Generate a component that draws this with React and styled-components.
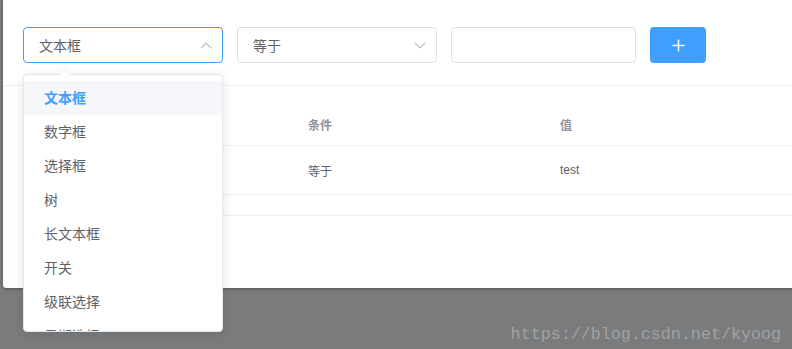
import React from "react";
import styled, { createGlobalStyle } from "styled-components";

const GlobalStyle = createGlobalStyle`
  html, body { margin: 0; padding: 0; }
  body {
    background: #7a7b7d;
    font-family: "Liberation Sans", "Noto Sans CJK SC", sans-serif;
  }
`;

const Page = styled.div`
  position: relative;
  width: 792px;
  height: 349px;
  overflow: hidden;
  background: #7a7b7d;
`;

const Dialog = styled.div`
  margin-left: 3px;
  width: 800px;
  height: 288px;
  background: #fff;
  border-bottom-left-radius: 3px;
  box-shadow: 0 1px 3px rgba(0, 0, 0, 0.35);
  overflow: hidden;
`;

const Toolbar = styled.div`
  display: flex;
  align-items: center;
  gap: 14px;
  padding: 27px 0 0 20px;
  height: 36px;
`;

const SelectBox = styled.div`
  box-sizing: border-box;
  width: 200px;
  height: 36px;
  border: 1px solid ${(p) => (p.$focused ? "#409eff" : "#dcdfe6")};
  border-radius: 4px;
  display: flex;
  align-items: center;
  justify-content: space-between;
  padding: 0 10px 0 15px;
  font-size: 14px;
  color: #606266;
`;

const TextInput = styled.div`
  box-sizing: border-box;
  width: 185px;
  height: 36px;
  border: 1px solid #dcdfe6;
  border-radius: 4px;
`;

const AddButton = styled.div`
  box-sizing: border-box;
  width: 56px;
  height: 36px;
  border-radius: 4px;
  background: #409eff;
  display: flex;
  align-items: center;
  justify-content: center;
`;

const Divider = styled.div`
  margin-top: 22px;
  height: 1px;
  background: #ebeef5;
`;

const Table = styled.div`
  margin: 17px 0 0 20px;
  width: 780px;
`;

const Row = styled.div`
  display: grid;
  grid-template-columns: 275px 252px 1fr;
  height: ${(p) => p.$h}px;
  border-bottom: 1px solid #ebeef5;
  align-items: center;
`;

const Cell = styled.div`
  padding-left: 10px;
  font-size: 12px;
  color: ${(p) => (p.$head ? "#909399" : "#606266")};
  font-weight: ${(p) => (p.$head ? "bold" : "normal")};
`;

const Dropdown = styled.div`
  position: absolute;
  left: 23px;
  top: 74px;
  box-sizing: border-box;
  width: 200px;
  height: 258px;
  background: #fff;
  border: 1px solid #e4e7ed;
  border-radius: 4px;
  box-shadow: 0 2px 12px rgba(0, 0, 0, 0.1);
`;

const DropdownClip = styled.div`
  height: 100%;
  overflow: hidden;
  border-radius: 4px;
`;

const List = styled.ul`
  list-style: none;
  margin: 0;
  padding: 6px 0 0;
`;

const Item = styled.li`
  height: 34px;
  line-height: 34px;
  padding: 0 20px;
  font-size: 14px;
  color: ${(p) => (p.$active ? "#409eff" : "#606266")};
  font-weight: ${(p) => (p.$active ? "bold" : "normal")};
  background: ${(p) => (p.$active ? "#f5f7fa" : "transparent")};
`;

const Arrow = styled.div`
  position: absolute;
  top: -6px;
  left: 35px;
  width: 0;
  height: 0;
  border-left: 6px solid transparent;
  border-right: 6px solid transparent;
  border-bottom: 6px solid #e4e7ed;
  &::after {
    content: "";
    position: absolute;
    left: -6px;
    top: 1px;
    border-left: 6px solid transparent;
    border-right: 6px solid transparent;
    border-bottom: 6px solid #fff;
  }
`;

const Watermark = styled.div`
  position: absolute;
  right: 11px;
  bottom: 5px;
  font-family: "Liberation Mono", monospace;
  font-size: 16.7px;
  color: #a0a1a3;
`;

const Chevron = ({ up }) => (
  <svg width="12" height="7" viewBox="0 0 12 7">
    <path
      d={up ? "M0.8 6.2 L6 1.2 L11.2 6.2" : "M0.8 0.8 L6 5.8 L11.2 0.8"}
      fill="none"
      stroke="#c0c4cc"
      strokeWidth="1.2"
    />
  </svg>
);

const Plus = () => (
  <svg width="13" height="13" viewBox="0 0 13 13">
    <path d="M6.5 0.5 V12.5 M0.5 6.5 H12.5" stroke="#fff" strokeWidth="1.5" />
  </svg>
);

const options = ["文本框", "数字框", "选择框", "树", "长文本框", "开关", "级联选择", "日期选择"];

export default function App() {
  return (
    <>
      <GlobalStyle />
      <Page>
        <Dialog>
          <Toolbar>
            <SelectBox $focused>
              <span>文本框</span>
              <Chevron up />
            </SelectBox>
            <SelectBox>
              <span>等于</span>
              <Chevron />
            </SelectBox>
            <TextInput />
            <AddButton>
              <Plus />
            </AddButton>
          </Toolbar>
          <Divider />
          <Table>
            <Row $h={42}>
              <Cell $head />
              <Cell $head>条件</Cell>
              <Cell $head>值</Cell>
            </Row>
            <Row $h={48}>
              <Cell />
              <Cell>等于</Cell>
              <Cell>test</Cell>
            </Row>
            <Row $h={20} />
          </Table>
        </Dialog>
        <Dropdown>
          <Arrow />
          <DropdownClip>
            <List>
              {options.map((o, i) => (
                <Item key={o} $active={i === 0}>
                  {o}
                </Item>
              ))}
            </List>
          </DropdownClip>
        </Dropdown>
        <Watermark>https://blog.csdn.net/kyoog</Watermark>
      </Page>
    </>
  );
}
